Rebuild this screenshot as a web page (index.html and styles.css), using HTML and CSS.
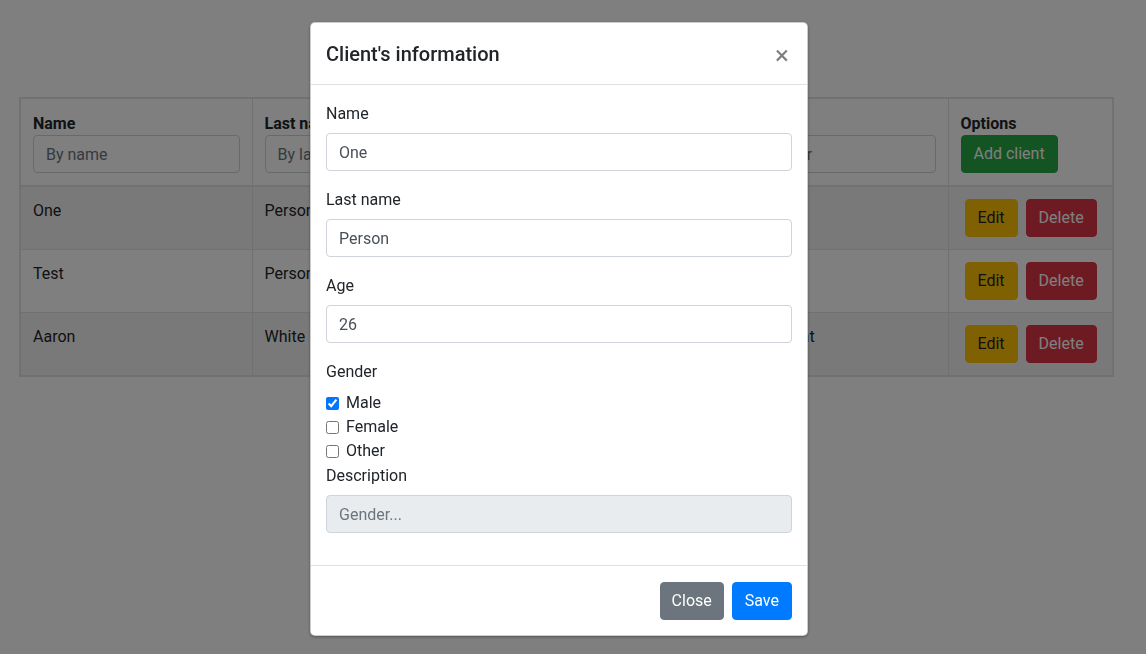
FILE: index.html
```html
<!DOCTYPE html>
<html lang="en">
<head>
<meta charset="utf-8">
<title>Clients</title>
<link rel="stylesheet" href="styles.css">
</head>
<body>
<main class="page">
  <table class="clients">
    <colgroup>
      <col class="col-data"><col class="col-data"><col class="col-data"><col class="col-data"><col class="col-opts">
    </colgroup>
    <thead>
      <tr>
        <th><span class="th-label">Name</span><input class="form-control" placeholder="By name"></th>
        <th><span class="th-label">Last name</span><input class="form-control" placeholder="By last name"></th>
        <th><span class="th-label">Age</span><input class="form-control" placeholder="By age"></th>
        <th><span class="th-label">Gender</span><input class="form-control" placeholder="By gender"></th>
        <th><span class="th-label">Options</span><button class="btn btn-success">Add client</button></th>
      </tr>
    </thead>
    <tbody>
      <tr class="odd">
        <td>One</td><td>Person</td><td>26</td><td>Male</td>
        <td class="opts"><button class="btn btn-warning">Edit</button><button class="btn btn-danger">Delete</button></td>
      </tr>
      <tr>
        <td>Test</td><td>Person</td><td>30</td><td>Female</td>
        <td class="opts"><button class="btn btn-warning">Edit</button><button class="btn btn-danger">Delete</button></td>
      </tr>
      <tr class="odd">
        <td>Aaron</td><td>White</td><td>41</td><td>Not relevant</td>
        <td class="opts"><button class="btn btn-warning">Edit</button><button class="btn btn-danger">Delete</button></td>
      </tr>
    </tbody>
  </table>
</main>

<div class="backdrop"></div>

<div class="modal" role="dialog">
  <div class="modal-header">
    <h5 class="modal-title">Client's information</h5>
    <button class="close" aria-label="Close">&times;</button>
  </div>
  <div class="modal-body">
    <div class="form-group">
      <label class="label">Name</label>
      <input class="form-control" value="One">
    </div>
    <div class="form-group">
      <label class="label">Last name</label>
      <input class="form-control" value="Person">
    </div>
    <div class="form-group">
      <label class="label">Age</label>
      <input class="form-control" value="26">
    </div>
    <label class="label">Gender</label>
    <div class="check"><input type="checkbox" checked><span>Male</span></div>
    <div class="check"><input type="checkbox"><span>Female</span></div>
    <div class="check"><input type="checkbox"><span>Other</span></div>
    <div class="form-group last">
      <label class="label">Description</label>
      <input class="form-control" placeholder="Gender..." readonly>
    </div>
  </div>
  <div class="modal-footer">
    <button class="btn btn-secondary btn-close">Close</button>
    <button class="btn btn-primary">Save</button>
  </div>
</div>
</body>
</html>
```
FILE: styles.css
```css
* { box-sizing: border-box; }

html, body {
  margin: 0;
  height: 100%;
}

body {
  font-family: Roboto, "Liberation Sans", sans-serif;
  font-size: 16px;
  line-height: 1.5;
  color: #212529;
  background: #fff;
  overflow: hidden;
}

.page {
  padding: 97px 32px 0 19px;
}

.clients {
  width: 1093px;
  table-layout: fixed;
  border-collapse: collapse;
  border: 2px solid #dee2e6;
}

.col-data { width: 232px; }
.col-opts { width: 165px; }

.clients th,
.clients td {
  border: 1px solid #dee2e6;
  padding: 12px;
  text-align: left;
}

.clients th {
  vertical-align: bottom;
  border-bottom: 2px solid #dee2e6;
  font-weight: 700;
}

.clients td { vertical-align: top; }

.clients tbody tr.odd { background: rgba(0, 0, 0, .05); }

.th-label {
  display: block;
  padding-top: 2px;
  line-height: 22px;
  white-space: nowrap;
}

.opts { white-space: nowrap; }

.opts .btn { margin: 0 4px; }

.form-control {
  display: block;
  width: 100%;
  height: 38px;
  padding: 6px 12px;
  font: 400 16px/1.5 Roboto, "Liberation Sans", sans-serif;
  color: #495057;
  background: #fff;
  border: 1px solid #ced4da;
  border-radius: 4px;
  outline: none;
}

.form-control::placeholder { color: #6c757d; }

.form-control[readonly] { background: #e9ecef; }

.btn {
  display: inline-block;
  font: 400 16px/24px Roboto, "Liberation Sans", sans-serif;
  padding: 6px 12px;
  border: 1px solid transparent;
  border-radius: 4px;
  color: #fff;
  cursor: pointer;
}

.btn-success { background: #28a745; border-color: #28a745; }
.btn-warning { background: #ffc107; border-color: #ffc107; color: #212529; }
.btn-danger { background: #dc3545; border-color: #dc3545; }
.btn-secondary { background: #6c757d; border-color: #6c757d; }
.btn-primary { background: #007bff; border-color: #007bff; }

.btn-close { padding: 6px 11px; }

.backdrop {
  position: fixed;
  inset: 0;
  background: rgba(0, 0, 0, .5);
}

.modal {
  position: fixed;
  left: 310px;
  top: 22px;
  width: 498px;
  background: #fff;
  border: 1px solid rgba(0, 0, 0, .2);
  border-radius: 5px;
  box-shadow: 0 1px 3px rgba(0, 0, 0, .35);
  display: flex;
  flex-direction: column;
}

.modal-header {
  display: flex;
  align-items: center;
  justify-content: space-between;
  padding: 16px 15px 15px 15px;
  border-bottom: 1px solid #dee2e6;
}

.modal-title {
  margin: 0;
  font-size: 20px;
  font-weight: 500;
  line-height: 30px;
}

.close {
  background: none;
  border: 0;
  padding: 2px 3px 0 0;
  font: 400 26px/1 Roboto, "Liberation Sans", sans-serif;
  color: #000;
  opacity: .5;
  text-shadow: 0 1px 0 #fff;
}

.modal-body {
  padding: 16px 15px;
}

.form-group { margin-bottom: 16px; }

.label {
  display: block;
  margin-bottom: 8px;
  padding-top: 1px;
  line-height: 23px;
}

.check {
  display: flex;
  align-items: center;
  height: 24px;
}

.check input {
  width: 13px;
  height: 13px;
  margin: 0 7px 0 0;
  accent-color: #0075ff;
}

.modal-footer {
  display: flex;
  justify-content: flex-end;
  gap: 8px;
  padding: 16px 15px 15px;
  border-top: 1px solid #dee2e6;
}
```
